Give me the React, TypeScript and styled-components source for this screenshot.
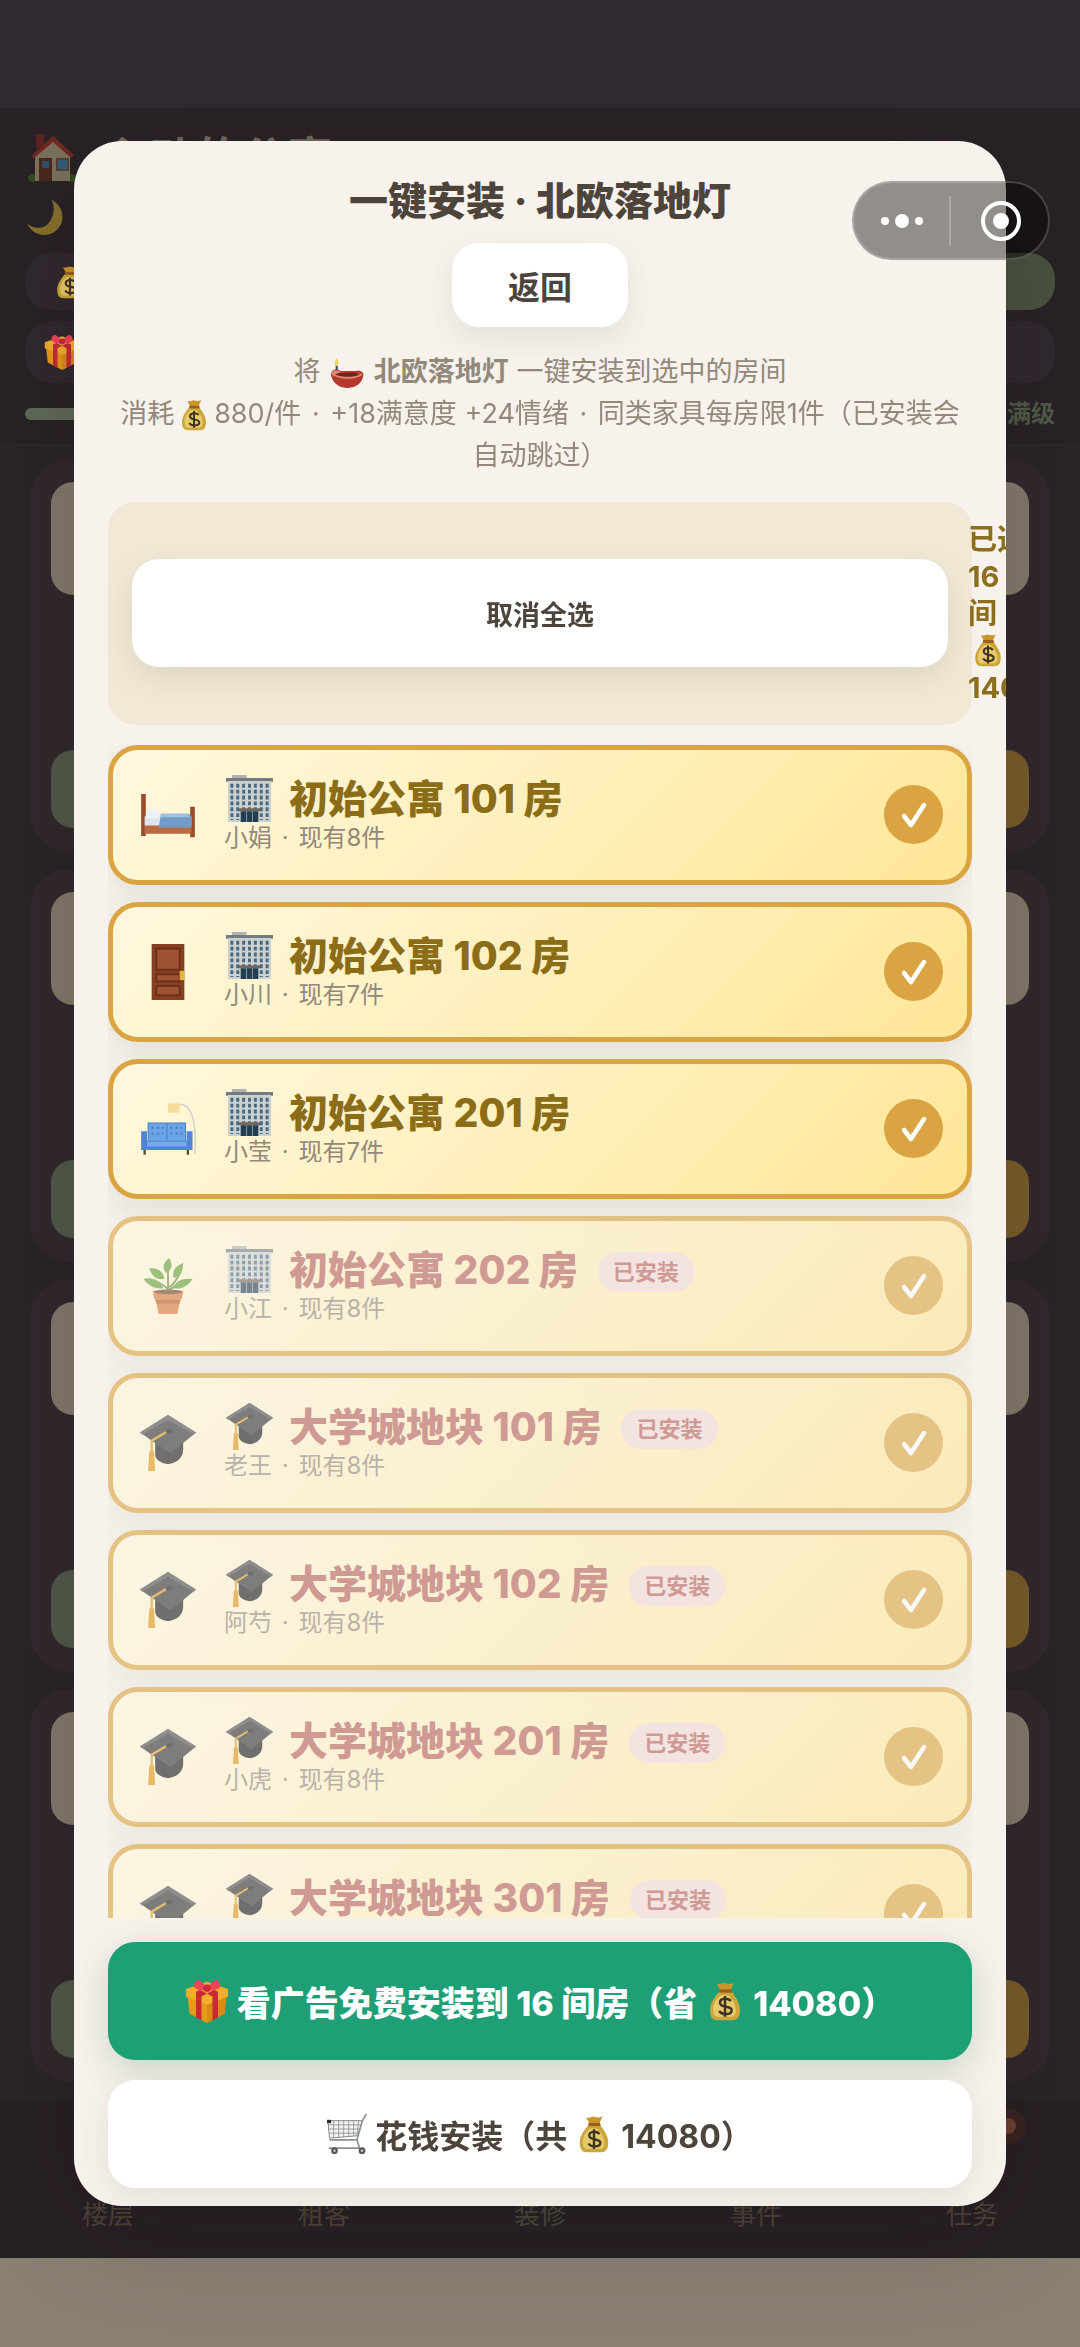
import React, { useState } from 'react';
import styled, { createGlobalStyle, css } from 'styled-components';

const GlobalStyle = createGlobalStyle`
  *, *::before, *::after { box-sizing: border-box; }
  body {
    margin: 0;
    background: #8a8173;
    font-family: Inter, "Noto Sans CJK SC", "Noto Sans", sans-serif;
    color: #4d443b;
  }
  button, input { font: inherit; color: inherit; margin: 0; }
  p, h1, h2, ul { margin: 0; padding: 0; }
`;

/* ---------- icons ---------- */

type IconName =
  | 'house' | 'moon' | 'money' | 'gift' | 'lamp' | 'bed' | 'door'
  | 'sofa' | 'building' | 'cap' | 'plant' | 'cart';

const drawings: Record<IconName, React.ReactNode> = {
  house: (
    <>
      <rect x="8" y="0" width="8" height="14" fill="#5c241f" />
      <ellipse cx="5" cy="44" rx="5" ry="4" fill="#374a21" />
      <ellipse cx="43" cy="44" rx="5" ry="4" fill="#374a21" />
      <path d="M7 22 25 5l17 17v25H7Z" fill="#7b715c" />
      <path d="M3 22 25 2l21 19-3 3L25 8 6 24Z" fill="#6f2922" />
      <rect x="11" y="24" width="13" height="23" fill="#49291c" />
      <rect x="14" y="27" width="7" height="7" fill="#2e5170" />
      <rect x="28" y="24" width="13" height="13" fill="#534235" />
      <rect x="30" y="26" width="9" height="9" fill="#335d7e" />
    </>
  ),
  moon: <path d="M31 1c15 8 18 26 8 37-10 11-30 11-39-7 9 8 23 7 29-3 6-9 6-18 2-27Z" fill="#85702d" />,
  money: (
    <>
      <path d="M14 3c4 1 6 0 9-1 4 1 7 2 12 0l-5 10H19Z" fill="#c9962b" />
      <path d="M18 11h13c3 5 11 13 11 24 0 8-3 12-9 12H15c-6 0-9-4-9-12 0-11 9-19 12-24Z" fill="#cba63a" />
      <path d="M19 17c-6 5-10 11-9 19 0 4 2 7 5 7h16c4 0 6-3 6-7 0-8-4-14-9-19Z" fill="#e6ca6c" />
      <path d="M17 10h15v4H17Z" fill="#9a5f1c" />
      <path d="M31 24c-3-4-13-4-13 2 0 7 14 3 14 9 0 6-12 6-15 1M24 18v25" fill="none" stroke="#40331f" strokeWidth="3" />
    </>
  ),
  gift: (
    <>
      <path d="M2 12 24 4l22 8-3 26-19 10L5 38Z" fill="#e89a19" />
      <path d="M24 22 46 12l-3 26-19 10Z" fill="#d98c12" />
      <path d="M1 11 24 3l23 8v8l-23 9L1 19Z" fill="#f2ae2c" />
      <path d="m9 8 7-3 20 9v28l-6 3V19ZM39 8l-7-3-20 9v28l6 3V19Z" fill="#c72b34" />
      <path d="M24 10C16-2 11 0 10 6c-1 5 6 7 14 6 8 1 16-1 14-6-1-6-6-8-14 4Z" fill="#ef4358" />
      <circle cx="24" cy="10" r="4" fill="#c92a40" />
    </>
  ),
  lamp: (
    <>
      <path d="M9 3c4 4 4 10 0 12-4-2-3-8 0-12Z" fill="#f4d45e" />
      <path d="M8 14h3v8H8Z" fill="#354d8a" />
      <path d="M1 25c2-6 8-8 14-4h22c8-1 11 3 10 7-2 11-11 17-21 17C11 45 3 37 1 25Z" fill="#b4382b" />
      <path d="M1 25c3-5 8-6 14-3 9 4 20 2 31 3-5 9-34 10-45 0Z" fill="#df8a72" />
      <path d="M7 26c9 4 26 5 35 0-8-4-17-1-27-3Z" fill="#74231c" />
    </>
  ),
  bed: (
    <>
      <path d="M1 6h4v36H1ZM43 17h4v26h-4Z" fill="#9a4d2d" />
      <path d="M4 31h40v9H4Z" fill="#b96a41" />
      <path d="M4 25h40v8H4Z" fill="#dce5ec" />
      <path d="M5 21c4-4 10-3 12 2l-1 4H5Z" fill="#edf2f5" />
      <path d="M18 23h23c2 0 3 2 3 4v8H16Z" fill="#729cc8" />
      <path d="M18 23h23l2 3H17Z" fill="#9fc0df" />
    </>
  ),
  door: (
    <>
      <rect x="10" y="0" width="28" height="48" fill="#853f24" />
      <g fill="#9d5233" stroke="#6b2e17" strokeWidth="1.5">
        <rect x="14" y="4" width="20" height="18" />
        <rect x="14" y="26" width="20" height="6" />
        <rect x="14" y="36" width="20" height="8" />
      </g>
      <path d="M34 23h4v8h-4Z" fill="#e5b93b" />
    </>
  ),
  sofa: (
    <>
      <path d="M32 3c12-2 17 14 15 42" fill="none" stroke="#cfd0c8" strokeWidth="1.3" />
      <path d="M24 2h10v8H24Z" fill="#f8dc99" />
      <path d="M7 19h16v16H7ZM23 19h16v16H23Z" fill="#6ba4e5" stroke="#4c83cb" />
      <path d="M1 26h5v8h34v-8h5v16H1Z" fill="#4f86cd" />
      <path d="M6 35h34v4H6Z" fill="#77abe5" />
      <path d="M3 42h2v4H3ZM40 42h2v4h-2Z" fill="#654736" />
      <path d="M10 23h10M10 28h10M26 23h10M26 28h10" stroke="#3d72b9" strokeWidth="1.5" strokeDasharray="1.5 3" />
    </>
  ),
  building: (
    <>
      <path d="M6 0h15v4H6Z" fill="#b1b2ad" />
      <path d="M0 3h48v4H0Z" fill="#737c80" />
      <path d="M2 6h44v42H2Z" fill="#ccd0cf" />
      <path d="M6 9v37M12 9v37M18 9v27M24 9v27M30 9v27M36 9v37M42 9v37" stroke="#47697f" strokeWidth="3" strokeDasharray="4 2" />
      <path d="M13 34h22v3H13Z" fill="#76665d" />
      <path d="M15 37h18v11H15Z" fill="#223e50" />
      <path d="M21 37v11M27 37v11" stroke="#8a9ba2" />
    </>
  ),
  cap: (
    <>
      <path d="M13 19v15c0 5 7 8 12 8 7-1 12-6 12-12V20Z" fill="#17191c" />
      <path d="M0 15 24 0l24 15-22 18Z" fill="#2f3033" />
      <path d="M0 15 24 0l24 15-2 2L24 4 2 17Z" fill="#4b4d50" />
      <path d="M25 13 10 22v11" fill="none" stroke="#d99a20" strokeWidth="2" />
      <path d="M8 31h4l1 17H7Z" fill="#df9412" />
      <ellipse cx="25" cy="14" rx="3" ry="2" fill="#17191c" />
    </>
  ),
  plant: (
    <>
      <path d="M24 31V10M24 27c-4-5-7-5-12-8M24 25c5-1 7-7 11-13M24 28c5-4 8-5 12-6" fill="none" stroke="#62883b" strokeWidth="1.5" />
      <path d="M23 13c-5-4-3-9 2-13 3 5 3 9-2 13ZM29 17c-2-7 2-10 8-13 0 7-2 12-8 13ZM21 18c-9 1-11-4-13-9 6-1 12 2 13 9ZM20 26c-8 1-13-3-17-8 7-2 14 1 17 8ZM28 26c3-7 9-9 17-8-4 6-9 9-17 8Z" fill="#5fa234" />
      <path d="M11 28h26l-1 7H12Z" fill="#d87435" />
      <path d="M13 34h22l-3 14H16Z" fill="#d87435" />
      <ellipse cx="24" cy="29" rx="12" ry="2" fill="#714128" />
      <path d="m13 36 1 3h20l1-3Z" fill="#b7592a" />
    </>
  ),
  cart: (
    <>
      <path d="M47 0 42 9l-6 22H3M36 31l3 10H2" fill="none" stroke="#8f9193" strokeWidth="2" />
      <path d="M1 8h41l-5 18L3 29Z" fill="#f0f1f1" stroke="#85888a" strokeWidth="1.2" />
      <path d="M2 13h38M2 18h37M3 23h35M8 8v20M14 8v20M20 8v19M26 8v19M32 8v18M38 8l-2 18" stroke="#8d9092" />
      <path d="M0 7h5v4H0Z" fill="#2d2d2d" />
      <circle cx="9" cy="44" r="4" fill="#55575b" />
      <circle cx="42" cy="44" r="4" fill="#55575b" />
      <circle cx="9" cy="44" r="1.5" fill="#c9cbcd" />
      <circle cx="42" cy="44" r="1.5" fill="#c9cbcd" />
    </>
  ),
};

const Glyph = styled.svg<{ $size: number; $gap?: number }>`
  display: inline-block;
  flex: none;
  width: ${(p) => p.$size}px;
  height: ${(p) => p.$size}px;
  margin: 0 ${(p) => p.$gap ?? 0}px;
  vertical-align: middle;
  overflow: visible;
`;

function Icon({ name, size, gap }: { name: IconName; size: number; gap?: number }) {
  return (
    <Glyph viewBox="0 0 48 48" $size={size} $gap={gap} aria-hidden="true">
      {drawings[name]}
    </Glyph>
  );
}

/* ---------- game screen behind the dialog ---------- */

const Screen = styled.div`
  display: flex;
  flex-direction: column;
  min-height: 100vh;
`;

const StatusBar = styled.div`
  height: 108px;
  background: #302a31;
`;

const GameHeader = styled.header`
  display: flex;
  flex-direction: column;
  padding: 22px 25px 12px;
  background: #292226;
  border-bottom: 1px solid #302a2e;
`;

const GameTitle = styled.h1`
  display: flex;
  align-items: center;
  gap: 27px;
  height: 56px;
  padding-left: 3px;
  font-size: 46px;
  line-height: 56px;
  font-weight: 700;
  color: #71695f;
`;

const TimeLine = styled.div`
  display: flex;
  align-items: center;
  height: 36px;
  margin: 14px 0 17px 2px;
`;

const StatRow = styled.div`
  display: grid;
  grid-template-columns: 1fr 1fr;
  gap: 16px;
  margin-bottom: 11px;
`;

const Stat = styled.div<{ $accent?: boolean }>`
  display: flex;
  align-items: center;
  height: 57px;
  padding-left: 28px;
  border-radius: 26px;
  background: ${(p) => (p.$accent ? '#4a5240' : '#30292f')};
`;

const TaskBar = styled(Stat)`
  height: 62px;
  padding-left: 19px;
`;

const LevelLine = styled.div`
  display: flex;
  align-items: center;
  gap: 14px;
  margin-top: 13px;
  font-size: 24px;
  line-height: 36px;
  font-weight: 700;
  color: #505a49;
`;

const LevelTrack = styled.div`
  flex: 1;
  height: 12px;
  border-radius: 6px;
  background: #5f6a58;
`;

const Floors = styled.main`
  flex: 1;
  display: flex;
  flex-direction: column;
  gap: 17px;
  padding: 14px 30px;
  background: #2b2528;
`;

const FloorCard = styled.section`
  display: flex;
  flex-direction: column;
  justify-content: space-between;
  height: 393px;
  padding: 23px 21px 24px;
  border-radius: 40px;
  background: #31292f;
`;

const FloorBanner = styled.div`
  height: 113px;
  border-radius: 22px;
  background: #827a6b;
`;

const FloorActions = styled.div`
  display: grid;
  grid-template-columns: 1fr 1fr;
  gap: 20px;
`;

const FloorAction = styled.div<{ $tone: string }>`
  height: 78px;
  border-radius: 22px;
  background: ${(p) => p.$tone};
`;

const TabBar = styled.nav`
  display: grid;
  grid-template-columns: repeat(5, 1fr);
  height: 157px;
  padding-bottom: 24px;
  background: #272025;
`;

const Tab = styled.a<{ $active?: boolean }>`
  position: relative;
  display: flex;
  align-items: flex-end;
  justify-content: center;
  font-size: 26px;
  line-height: 38px;
  color: ${(p) => (p.$active ? '#454a3a' : '#4d4338')};
  text-decoration: none;
`;

const TabDot = styled.span`
  position: absolute;
  top: 7px;
  right: 54px;
  width: 36px;
  height: 36px;
  border: 10px solid #382423;
  border-radius: 50%;
  background: #6e4033;
`;

const HomeStrip = styled.div`
  height: 89px;
  background: #8a8173;
`;

/* ---------- mini program capsule ---------- */

const Capsule = styled.div`
  position: fixed;
  z-index: 3;
  top: 181px;
  right: 30px;
  display: flex;
  align-items: center;
  width: 198px;
  height: 79px;
  border: 2px solid rgba(255, 255, 255, 0.2);
  border-radius: 40px;
  background: rgba(0, 0, 0, 0.41);
`;

const CapsuleButton = styled.button`
  flex: 1;
  display: grid;
  place-items: center;
  height: 50px;
  padding: 0;
  border: 0;
  background: none;

  & + & {
    padding-left: 2px;
    border-left: 2px solid rgba(255, 255, 255, 0.24);
  }
`;

/* ---------- dialog ---------- */

const Scrim = styled.div`
  position: fixed;
  z-index: 2;
  inset: 0;
  display: flex;
  align-items: center;
  padding: 0 74px;
`;

const Dialog = styled.section`
  display: flex;
  flex-direction: column;
  width: 100%;
  height: 88vh;
  padding: 32px 34px 18px;
  overflow: hidden;
  border-radius: 48px;
  background: #f7f2ec;
`;

const Shadow = styled.div`
  display: flex;
  width: 100%;
  border-radius: 48px;
  box-shadow: 0 24px 110px rgba(20, 10, 10, 0.18);
`;

const DialogHead = styled.header`
  display: flex;
  flex-direction: column;
  align-items: center;
  gap: 14px;
`;

const DialogTitle = styled.h2`
  font-size: 39px;
  line-height: 56px;
  font-weight: 800;
`;

const buttonBase = css`
  border: 0;
  border-radius: 27px;
  background: #fff;
  font-weight: 700;
  cursor: pointer;
`;

const BackButton = styled.button`
  ${buttonBase}
  height: 84px;
  padding: 0 56px;
  font-size: 32px;
  box-shadow: 0 10px 32px rgba(60, 80, 50, 0.1);
`;

const Intro = styled.p`
  margin: 24px 0 25px;
  padding: 0 10px;
  font-size: 27px;
  line-height: 42px;
  text-align: center;
  color: #93897b;

  strong { font-weight: 700; }
`;

const Separator = styled.span`
  margin: 0 3px;
`;

const SelectBar = styled.div`
  display: flex;
  align-items: center;
  gap: 20px;
  margin-bottom: 20px;
  padding: 19px 24px;
  border-radius: 27px;
  background: #f1e9d6;
`;

const ToggleAll = styled.button`
  ${buttonBase}
  flex: 0 0 100%;
  height: 108px;
  font-size: 27px;
  box-shadow: 0 10px 32px rgba(90, 80, 50, 0.13);
`;

const Summary = styled.div`
  display: flex;
  flex: none;
  flex-direction: column;
  font-size: 29px;
  line-height: 37px;
  font-weight: 700;
  color: #8b6f1c;
  white-space: nowrap;
`;

const SummaryIcon = styled.span`
  display: flex;
  align-items: center;
  height: 37px;
`;

const RoomList = styled.ul`
  flex: 1;
  display: flex;
  flex-direction: column;
  gap: 17px;
  min-height: 0;
  margin-bottom: 24px;
  overflow-y: auto;
  scrollbar-width: none;
  list-style: none;
`;

const RoomRow = styled.label<{ $installed: boolean }>`
  display: flex;
  align-items: center;
  gap: 25px;
  height: 140px;
  padding: 0 24px;
  border: 5px solid #d9a441;
  border-radius: 30px;
  background: linear-gradient(135deg, #fff8df 0%, #ffe798 100%);
  box-shadow: 0 8px 30px rgba(50, 80, 60, 0.1);
  opacity: ${(p) => (p.$installed ? 0.6 : 1)};
  color: ${(p) => (p.$installed ? '#b5605a' : '#8b6c17')};
`;

const RoomIcon = styled.span`
  display: flex;
  justify-content: center;
  flex: 0 0 62px;
`;

const RoomText = styled.span`
  flex: 1;
  display: flex;
  flex-direction: column;
  min-width: 0;
`;

const RoomName = styled.span`
  display: flex;
  align-items: center;
  font-size: 39px;
  line-height: 46px;
  font-weight: 800;
  white-space: nowrap;
`;

const RoomLabel = styled.span`
  margin-left: 14px;
`;

const RoomMeta = styled.span`
  font-size: 24px;
  line-height: 32px;
  color: #93897b;
`;

const Badge = styled.span`
  margin: 4px 0 0 20px;
  padding: 0 15px;
  border-radius: 20px;
  background: #f1dada;
  font-size: 22px;
  line-height: 40px;
  font-weight: 700;
`;

const CheckWrap = styled.span`
  display: grid;
  place-items: center;
  flex: none;

  > * { grid-area: 1 / 1; }
  svg { width: 30px; height: 30px; pointer-events: none; }
`;

const CheckInput = styled.input`
  appearance: none;
  width: 59px;
  height: 59px;
  border: 3px solid #d9a441;
  border-radius: 50%;
  background: #fff;

  &:checked { background: #d9a441; }
`;

const Actions = styled.footer`
  display: flex;
  flex-direction: column;
  gap: 20px;
`;

const ActionButton = styled.button<{ $primary?: boolean }>`
  ${buttonBase}
  display: flex;
  align-items: center;
  justify-content: center;
  gap: 8px;
  height: ${(p) => (p.$primary ? 118 : 108)}px;
  font-size: ${(p) => (p.$primary ? 34 : 32)}px;
  box-shadow: 0 10px 36px ${(p) => (p.$primary ? 'rgba(30, 90, 60, 0.2)' : 'rgba(60, 80, 50, 0.1)')};
  ${(p) => p.$primary && css`
    background: #1f9f76;
    color: #fff;
    font-weight: 800;
  `}
`;

/* ---------- data ---------- */

interface Room {
  icon: IconName;
  estate: IconName;
  name: string;
  tenant?: string;
  owned?: string;
  installed: boolean;
}

const rooms: Room[] = [
  { icon: 'bed', estate: 'building', name: '初始公寓 101 房', tenant: '小娟', owned: '现有8件', installed: false },
  { icon: 'door', estate: 'building', name: '初始公寓 102 房', tenant: '小川', owned: '现有7件', installed: false },
  { icon: 'sofa', estate: 'building', name: '初始公寓 201 房', tenant: '小莹', owned: '现有7件', installed: false },
  { icon: 'plant', estate: 'building', name: '初始公寓 202 房', tenant: '小江', owned: '现有8件', installed: true },
  { icon: 'cap', estate: 'cap', name: '大学城地块 101 房', tenant: '老王', owned: '现有8件', installed: true },
  { icon: 'cap', estate: 'cap', name: '大学城地块 102 房', tenant: '阿芍', owned: '现有8件', installed: true },
  { icon: 'cap', estate: 'cap', name: '大学城地块 201 房', tenant: '小虎', owned: '现有8件', installed: true },
  { icon: 'cap', estate: 'cap', name: '大学城地块 301 房', installed: true },
];

const tabs = ['楼层', '租客', '装修', '事件', '任务'];

export default function App() {
  const [selected, setSelected] = useState<boolean[]>(rooms.map(() => true));

  const toggle = (index: number) =>
    setSelected((list) => list.map((on, i) => (i === index ? !on : on)));

  return (
    <>
      <GlobalStyle />
      <Screen>
        <StatusBar />
        <GameHeader>
          <GameTitle><Icon name="house" size={48} />心动的公寓</GameTitle>
          <TimeLine><Icon name="moon" size={38} /></TimeLine>
          <StatRow>
            <Stat><Icon name="money" size={34} /></Stat>
            <Stat $accent />
          </StatRow>
          <TaskBar><Icon name="gift" size={36} /></TaskBar>
          <LevelLine><LevelTrack />满级</LevelLine>
        </GameHeader>
        <Floors>
          {[0, 1, 2, 3].map((floor) => (
            <FloorCard key={floor}>
              <FloorBanner />
              <FloorActions>
                <FloorAction $tone="#505a4a" />
                <FloorAction $tone="#785c2a" />
              </FloorActions>
            </FloorCard>
          ))}
        </Floors>
        <TabBar>
          {tabs.map((tab) => (
            <Tab key={tab} href="#" $active={tab === '装修'}>
              {tab}
              {tab === '任务' && <TabDot />}
            </Tab>
          ))}
        </TabBar>
        <HomeStrip />
      </Screen>

      <Scrim>
        <Shadow>
          <Dialog role="dialog" aria-labelledby="dialog-title">
            <DialogHead>
              <DialogTitle id="dialog-title">一键安装 · 北欧落地灯</DialogTitle>
              <BackButton type="button">返回</BackButton>
            </DialogHead>
            <Intro>
              将 <Icon name="lamp" size={34} gap={2} /> <strong>北欧落地灯</strong> 一键安装到选中的房间
              <br />
              消耗<Icon name="money" size={32} gap={4} />880/件 <Separator>·</Separator> +18满意度 +24情绪 <Separator>·</Separator> 同类家具每房限1件（已安装会自动跳过）
            </Intro>
            <SelectBar>
              <ToggleAll type="button" onClick={() => setSelected(rooms.map(() => false))}>取消全选</ToggleAll>
              <Summary>
                <span>已选</span>
                <span>16</span>
                <span>间</span>
                <SummaryIcon><Icon name="money" size={34} gap={3} /></SummaryIcon>
                <span>14080</span>
              </Summary>
            </SelectBar>
            <RoomList>
              {rooms.map((room, index) => (
                <li key={room.name}>
                  <RoomRow $installed={room.installed}>
                    <RoomIcon><Icon name={room.icon} size={56} /></RoomIcon>
                    <RoomText>
                      <RoomName>
                        <Icon name={room.estate} size={47} gap={2} />
                        <RoomLabel>{room.name}</RoomLabel>
                        {room.installed && <Badge>已安装</Badge>}
                      </RoomName>
                      <RoomMeta>
                        {room.tenant ? <>{room.tenant} <Separator>·</Separator> {room.owned}</> : '\u00a0'}
                      </RoomMeta>
                    </RoomText>
                    <CheckWrap>
                      <CheckInput type="checkbox" checked={selected[index]} onChange={() => toggle(index)} />
                      <svg viewBox="0 0 30 30" aria-hidden="true">
                        <path d="m5 16 7 9L25 5" fill="none" stroke="#fff" strokeWidth="4.5" strokeLinecap="round" strokeLinejoin="round" />
                      </svg>
                    </CheckWrap>
                  </RoomRow>
                </li>
              ))}
            </RoomList>
            <Actions>
              <ActionButton type="button" $primary>
                <Icon name="gift" size={44} />
                <span>看广告免费安装到 16 间房（省</span>
                <Icon name="money" size={40} />
                <span>14080）</span>
              </ActionButton>
              <ActionButton type="button">
                <Icon name="cart" size={40} />
                <span>花钱安装（共</span>
                <Icon name="money" size={38} />
                <span>14080）</span>
              </ActionButton>
            </Actions>
          </Dialog>
        </Shadow>
      </Scrim>

      <Capsule>
        <CapsuleButton type="button" aria-label="更多">
          <svg width="42" height="16" viewBox="0 0 42 16" fill="#fff">
            <circle cx="4" cy="8" r="4" />
            <circle cx="21" cy="8" r="7" />
            <circle cx="38" cy="8" r="4" />
          </svg>
        </CapsuleButton>
        <CapsuleButton type="button" aria-label="关闭">
          <svg width="42" height="42" viewBox="0 0 42 42">
            <circle cx="21" cy="21" r="18" fill="none" stroke="#fff" strokeWidth="4" />
            <circle cx="21" cy="21" r="8" fill="#fff" />
          </svg>
        </CapsuleButton>
      </Capsule>
    </>
  );
}
